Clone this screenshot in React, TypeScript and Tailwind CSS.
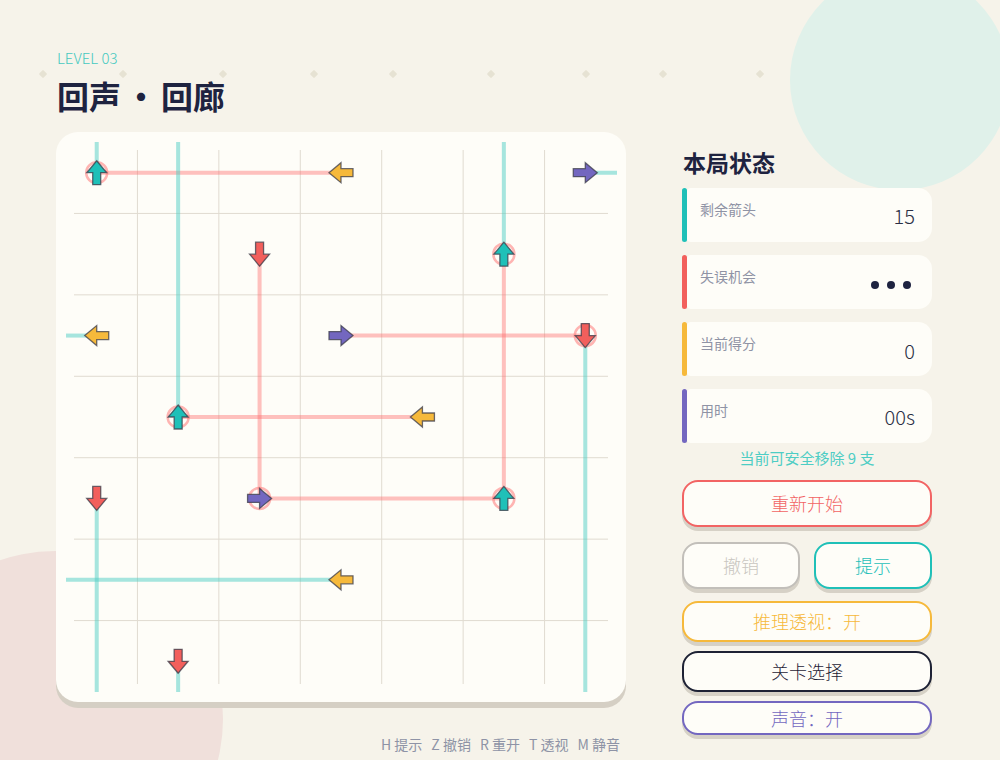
import React from "react";

const CELL = 570 / 7;
const c = (i: number) => CELL / 2 + CELL * i;

type Dir = "up" | "down" | "left" | "right";
const FILL: Record<string, string> = {
  teal: "#1fc0b8",
  red: "#f25f5c",
  yellow: "#f6b93b",
  purple: "#7367c0",
};
const ROT: Record<Dir, number> = { up: 0, right: 90, down: 180, left: 270 };

const arrows: { col: number; row: number; dir: Dir; color: string }[] = [
  { col: 0, row: 0, dir: "up", color: "teal" },
  { col: 3, row: 0, dir: "left", color: "yellow" },
  { col: 6, row: 0, dir: "right", color: "purple" },
  { col: 2, row: 1, dir: "down", color: "red" },
  { col: 5, row: 1, dir: "up", color: "teal" },
  { col: 0, row: 2, dir: "left", color: "yellow" },
  { col: 3, row: 2, dir: "right", color: "purple" },
  { col: 6, row: 2, dir: "down", color: "red" },
  { col: 1, row: 3, dir: "up", color: "teal" },
  { col: 4, row: 3, dir: "left", color: "yellow" },
  { col: 0, row: 4, dir: "down", color: "red" },
  { col: 2, row: 4, dir: "right", color: "purple" },
  { col: 5, row: 4, dir: "up", color: "teal" },
  { col: 3, row: 5, dir: "left", color: "yellow" },
  { col: 1, row: 6, dir: "down", color: "red" },
];

const circles: [number, number][] = [
  [0, 0],
  [5, 1],
  [6, 2],
  [1, 3],
  [2, 4],
  [5, 4],
];

// [x1,y1,x2,y2]
const pink: [number, number, number, number][] = [
  [c(0), c(0), c(3), c(0)],
  [c(2), c(1), c(2), c(4)],
  [c(2), c(4), c(5), c(4)],
  [c(5), c(1), c(5), c(4)],
  [c(3), c(2), c(6), c(2)],
  [c(1), c(3), c(4), c(3)],
];
const teal: [number, number, number, number][] = [
  [c(0), 10, c(0), c(0)],
  [c(1), 10, c(1), c(3)],
  [c(5), 10, c(5), c(1)],
  [c(6), c(0), 561, c(0)],
  [10, c(2), c(0), c(2)],
  [c(6), c(2), c(6), 560],
  [c(0), c(4), c(0), 560],
  [10, c(5), c(3), c(5)],
  [c(1), c(6), c(1), 560],
];

function Board() {
  return (
    <svg width="570" height="570" viewBox="0 0 570 570" className="block">
      {[1, 2, 3, 4, 5, 6].map((k) => (
        <g key={k}>
          <line x1={k * CELL} y1={18} x2={k * CELL} y2={552} stroke="#e0dbd0" strokeWidth="1" />
          <line x1={18} y1={k * CELL} x2={552} y2={k * CELL} stroke="#e0dbd0" strokeWidth="1" />
        </g>
      ))}
      {pink.map(([a, b, d, e], i) => (
        <line key={"p" + i} x1={a} y1={b} x2={d} y2={e} stroke="#ff6b6b" strokeOpacity="0.42" strokeWidth="4" />
      ))}
      {teal.map(([a, b, d, e], i) => (
        <line key={"t" + i} x1={a} y1={b} x2={d} y2={e} stroke="#4ecdc4" strokeOpacity="0.5" strokeWidth="4" />
      ))}
      {circles.map(([col, row], i) => (
        <circle key={"c" + i} cx={c(col)} cy={c(row)} r="10.5" fill="none" stroke="#ff6b6b" strokeOpacity="0.5" strokeWidth="2.5" />
      ))}
      {arrows.map((a, i) => (
        <polygon
          key={"a" + i}
          points="0,-12 10,0 4,0 4,12 -4,12 -4,0 -10,0"
          transform={`translate(${c(a.col)} ${c(a.row)}) rotate(${ROT[a.dir]})`}
          fill={FILL[a.color]}
          stroke="#3b3b48"
          strokeOpacity="0.75"
          strokeWidth="1.3"
        />
      ))}
    </svg>
  );
}

function StatCard({ label, color, children, top }: { label: string; color: string; children: React.ReactNode; top: string }) {
  return (
    <div className="flex h-[54px] w-[250px]">
      <div className={`w-[5px] rounded-full ${color}`} />
      <div className="flex flex-1 justify-between rounded-l-[4px] rounded-r-[14px] bg-[#fefdf8] pl-[13px] pr-[17px]">
        <div className="pt-[12px] text-[14px] leading-[18px] text-[#8f93a5]">{label}</div>
        <div className={top}>{children}</div>
      </div>
    </div>
  );
}

const dotsX = [43, 123, 223, 314, 393, 491, 586, 663, 760];

export default function App() {
  return (
    <div className="relative h-[760px] w-[1000px] overflow-hidden bg-[#f6f3ea] font-['Noto_Sans_CJK_SC','Noto_Sans',sans-serif]">
      <div className="absolute left-[790px] top-[-30px] h-[220px] w-[220px] rounded-full bg-[#e0f1ea]" />
      <div className="absolute left-[-113px] top-[551px] h-[336px] w-[336px] rounded-full bg-[#f0e0db]" />
      {dotsX.map((x) => (
        <div
          key={x}
          className="absolute top-[71px] h-[6px] w-[6px] rotate-45 rounded-[1px] bg-[#e6e2d3]"
          style={{ left: x - 3 }}
        />
      ))}

      <div className="relative flex pl-[56px]">
        <div className="w-[570px] pt-[48px]">
          <div className="pl-[1px] text-[15px] font-light leading-[20px] text-[#45c9c0]">LEVEL 03</div>
          <div className="mt-[7px] flex pl-[1px] text-[32px] font-bold leading-[40px] text-[#1e2340]">
            <span>回声</span>
            <span className="w-[40px] text-center">•</span>
            <span>回廊</span>
          </div>
          <div className="mt-[17px] h-[570px] w-[570px] overflow-hidden rounded-[22px] bg-[#fefdf8] shadow-[0_6px_0_#d5cfc4]">
            <Board />
          </div>
          <div className="mt-[32px] flex justify-end gap-[9px] pr-[6px] text-[14px] leading-[20px] text-[#8e93a6]">
            <span>H 提示</span>
            <span>Z 撤销</span>
            <span>R 重开</span>
            <span>T 透视</span>
            <span>M 静音</span>
          </div>
        </div>

        <div className="ml-[56px] w-[250px] pt-[147px]">
          <div className="pl-[1px] text-[23px] font-bold leading-[30px] text-[#1e2340]">本局状态</div>
          <div className="mt-[11px] flex flex-col gap-[13px]">
            <StatCard label="剩余箭头" color="bg-[#1fc0b8]" top="pt-[14px] text-[20px] font-light leading-[28px] text-[#2a2f45]">
              15
            </StatCard>
            <StatCard label="失误机会" color="bg-[#f25f5c]" top="mr-[4px] flex gap-[8px] pt-[26px]">
              <span className="h-[8px] w-[8px] rounded-full bg-[#1e2340]" />
              <span className="h-[8px] w-[8px] rounded-full bg-[#1e2340]" />
              <span className="h-[8px] w-[8px] rounded-full bg-[#1e2340]" />
            </StatCard>
            <StatCard label="当前得分" color="bg-[#f6b93b]" top="pt-[15px] text-[20px] font-light leading-[28px] text-[#2a2f45]">
              0
            </StatCard>
            <StatCard label="用时" color="bg-[#7367c0]" top="pt-[14px] text-[20px] font-light leading-[28px] text-[#2a2f45]">
              00s
            </StatCard>
          </div>
          <div className="mt-[5px] text-center text-[15px] leading-[20px] text-[#4ecdc4]">当前可安全移除 9 支</div>

          <button className="mt-[12px] flex h-[47px] w-[250px] items-center justify-center rounded-[16px] border-2 border-[#f26464] bg-[#fefdf8] text-[18px] font-light text-[#f26464] shadow-[0_4px_0_#d6d1c6]">
            重新开始
          </button>
          <div className="mt-[15px] flex justify-between">
            <button className="flex h-[47px] w-[118px] items-center justify-center rounded-[16px] border-2 border-[#c2bfba] bg-[#fefdf8] text-[18px] font-light text-[#c9c6c0] shadow-[0_4px_0_#d6d1c6]">
              撤销
            </button>
            <button className="flex h-[47px] w-[118px] items-center justify-center rounded-[16px] border-2 border-[#1fc0b8] bg-[#fefdf8] text-[18px] font-light text-[#1fc0b8] shadow-[0_4px_0_#d6d1c6]">
              提示
            </button>
          </div>
          <button className="mt-[12px] flex h-[41px] w-[250px] items-center justify-center rounded-[16px] border-2 border-[#f6b93b] bg-[#fefdf8] text-[18px] font-light text-[#f6b93b] shadow-[0_4px_0_#d6d1c6]">
            推理透视：开
          </button>
          <button className="mt-[9px] flex h-[41px] w-[250px] items-center justify-center rounded-[16px] border-2 border-[#1e2235] bg-[#fefdf8] text-[18px] font-light text-[#1e2235] shadow-[0_4px_0_#d6d1c6]">
            关卡选择
          </button>
          <button className="mt-[9px] flex h-[34px] w-[250px] items-center justify-center rounded-[16px] border-2 border-[#7367c0] bg-[#fefdf8] text-[18px] font-light text-[#7367c0] shadow-[0_4px_0_#d6d1c6]">
            声音：开
          </button>
        </div>
      </div>
    </div>
  );
}
